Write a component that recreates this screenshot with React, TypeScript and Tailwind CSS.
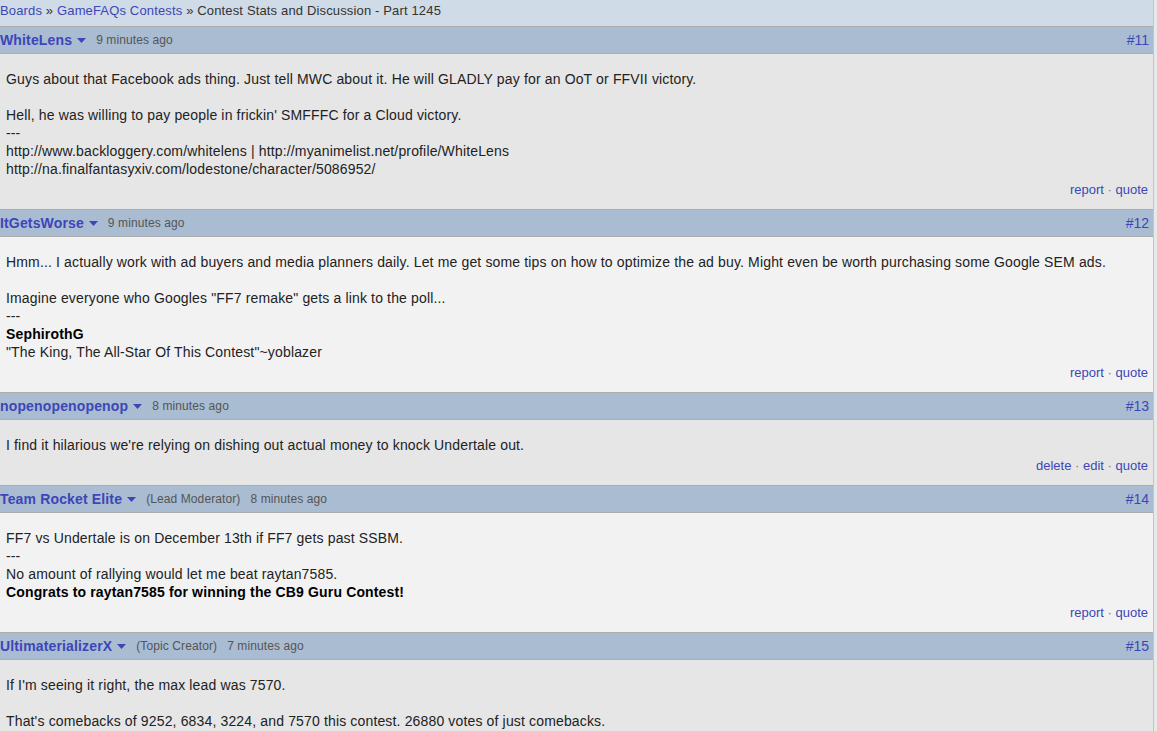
import React from 'react'

type Post = {
  num: number
  user: string
  role?: string
  time: string
  lines: React.ReactNode[]
  actions: string[]
}

const POSTS: Post[] = [
  {
    num: 11,
    user: 'WhiteLens',
    time: '9 minutes ago',
    lines: [
      'Guys about that Facebook ads thing. Just tell MWC about it. He will GLADLY pay for an OoT or FFVII victory.',
      '',
      "Hell, he was willing to pay people in frickin' SMFFFC for a Cloud victory.",
      '---',
      'http://www.backloggery.com/whitelens | http://myanimelist.net/profile/WhiteLens',
      'http://na.finalfantasyxiv.com/lodestone/character/5086952/',
    ],
    actions: ['report', 'quote'],
  },
  {
    num: 12,
    user: 'ItGetsWorse',
    time: '9 minutes ago',
    lines: [
      'Hmm... I actually work with ad buyers and media planners daily. Let me get some tips on how to optimize the ad buy. Might even be worth purchasing some Google SEM ads.',
      '',
      'Imagine everyone who Googles "FF7 remake" gets a link to the poll...',
      '---',
      <b className="text-black">SephirothG</b>,
      '"The King, The All-Star Of This Contest"~yoblazer',
    ],
    actions: ['report', 'quote'],
  },
  {
    num: 13,
    user: 'nopenopenopenop',
    time: '8 minutes ago',
    lines: ["I find it hilarious we're relying on dishing out actual money to knock Undertale out."],
    actions: ['delete', 'edit', 'quote'],
  },
  {
    num: 14,
    user: 'Team Rocket Elite',
    role: '(Lead Moderator)',
    time: '8 minutes ago',
    lines: [
      'FF7 vs Undertale is on December 13th if FF7 gets past SSBM.',
      '---',
      'No amount of rallying would let me beat raytan7585.',
      <b className="text-black">Congrats to raytan7585 for winning the CB9 Guru Contest!</b>,
    ],
    actions: ['report', 'quote'],
  },
  {
    num: 15,
    user: 'UltimaterializerX',
    role: '(Topic Creator)',
    time: '7 minutes ago',
    lines: [
      "If I'm seeing it right, the max lead was 7570.",
      '',
      "That's comebacks of 9252, 6834, 3224, and 7570 this contest. 26880 votes of just comebacks.",
    ],
    actions: ['report', 'quote'],
  },
]

function Caret() {
  return (
    <svg width="9" height="5" viewBox="0 0 9 5" className="ml-[5px] mt-[1px]">
      <path d="M0 0h9L4.5 5z" fill="#3d46b8" />
    </svg>
  )
}

function PostBlock({ post, even }: { post: Post; even: boolean }) {
  return (
    <div>
      <div className="h-[28px] bg-[#a9bcd1] border-y border-[#adadad] flex items-center justify-between pr-[4px]">
        <div className="flex items-center">
          <span className="text-[14px] font-bold tracking-[0.15px] text-[#3d46b8]">{post.user}</span>
          <Caret />
          {post.role && <span className="ml-[10px] text-[12px] tracking-[0.1px] text-[#555]">{post.role}</span>}
          <span className="ml-[10px] text-[12px] tracking-[0.1px] text-[#555]">{post.time}</span>
        </div>
        <span className="text-[14px] text-[#3d46b8]">#{post.num}</span>
      </div>
      <div className={`${even ? 'bg-[#f2f2f2]' : 'bg-[#e6e6e6]'} pt-[16px] pb-[10px]`}>
        <div className="pl-[6px] text-[14px] leading-[18px] tracking-[0.15px] text-[#222]">
          {post.lines.map((line, i) => (
            <div key={i} className="min-h-[18px]">{line}</div>
          ))}
        </div>
        <div className="mt-[3px] pr-[5px] text-right text-[13px] leading-[18px] text-[#3d46b8]">
          {post.actions.map((a, i) => (
            <span key={a}>
              {i > 0 && <span className="text-[#777]"> · </span>}
              {a}
            </span>
          ))}
        </div>
      </div>
    </div>
  )
}

export default function App() {
  return (
    <div className="min-h-screen bg-[#e8e8e8] font-['Liberation_Sans',Arial,sans-serif]">
      <div className="w-[1154px] border-r border-[#c4c4c4] overflow-hidden">
        <div className="h-[26px] bg-[#cfdbe6] pt-[2px] text-[13px] leading-[18px] tracking-[0.15px] text-[#333]">
          <span className="text-[#3d46b8]">Boards</span>
          <span> » </span>
          <span className="text-[#3d46b8]">GameFAQs Contests</span>
          <span> » </span>
          <span>Contest Stats and Discussion - Part 1245</span>
        </div>
        {POSTS.map((p, i) => (
          <PostBlock key={p.num} post={p} even={i % 2 === 1} />
        ))}
      </div>
    </div>
  )
}
